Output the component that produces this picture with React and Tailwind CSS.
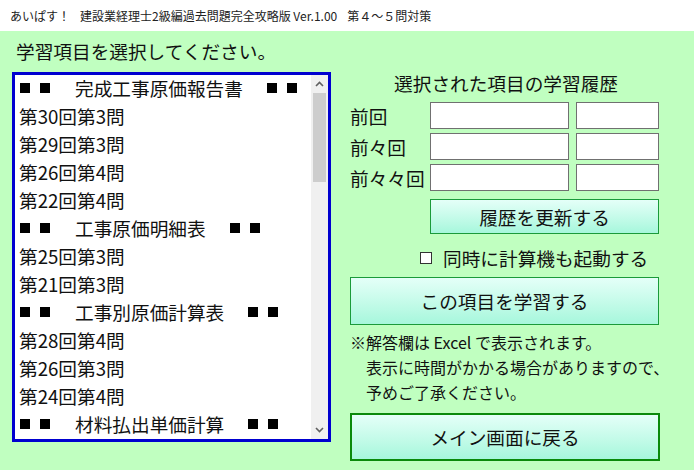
import React from "react";

const items = [
  { head: true, text: "完成工事原価報告書" },
  { text: "第30回第3問" },
  { text: "第29回第3問" },
  { text: "第26回第4問" },
  { text: "第22回第4問" },
  { head: true, text: "工事原価明細表" },
  { text: "第25回第3問" },
  { text: "第21回第3問" },
  { head: true, text: "工事別原価計算表" },
  { text: "第28回第4問" },
  { text: "第26回第3問" },
  { text: "第24回第4問" },
  { head: true, text: "材料払出単価計算" },
];

const Squares = () => (
  <span className="inline-flex gap-[10px]">
    <span className="inline-block w-[10px] h-[10px] bg-black" />
    <span className="inline-block w-[10px] h-[10px] bg-black" />
  </span>
);

const ListRow = ({ head, text }) => (
  <div className="h-[28px] pl-[5px] pb-[2px] flex items-center whitespace-nowrap">
    {head ? (
      <>
        <Squares />
        <span className="ml-[25px]">{text}</span>
        <span className="ml-[24px] flex">
          <Squares />
        </span>
      </>
    ) : (
      <span className="-ml-[1px]">{text}</span>
    )}
  </div>
);

const GreenButton = ({ children, className = "" }) => (
  <button
    className={`flex items-center justify-center bg-gradient-to-b from-[#e4fff8] to-[#a6f7dc] text-[18.67px] text-[#111] ${className}`}
  >
    {children}
  </button>
);

export default function App() {
  return (
    <div className="w-[694px] h-[470px] flex flex-col bg-[#c0ffc0] font-['Noto_Sans_CJK_JP','Noto_Sans',sans-serif] text-[#111] overflow-hidden">
      {/* title bar */}
      <div className="h-[31px] bg-white flex items-center pl-[10px] text-[12px] text-[#222] whitespace-nowrap">
        <span>あいぱす！</span>
        <span className="ml-[10px]">建設業経理士2級編過去問題完全攻略版 Ver.1.00</span>
        <span className="ml-[10px]">第４～５問対策</span>
      </div>

      <div className="flex flex-1">
        {/* left */}
        <div className="pl-[12px] flex flex-col">
          <div className="h-[41px] flex items-center pl-[4px] pb-[1px] text-[18.67px]">
            学習項目を選択してください。
          </div>
          <div className="w-[319px] h-[370px] border-[3px] border-[#0000d0] bg-white flex">
            <div className="flex-1 overflow-hidden text-[18.67px] leading-none">
              {items.map((it, i) => (
                <ListRow key={i} {...it} />
              ))}
            </div>
            <div className="w-[17px] bg-[#f0f0f0] flex flex-col items-center">
              <div className="h-[18px] flex items-center justify-center">
                <svg width="9" height="6" viewBox="0 0 9 6">
                  <path d="M1 5 L4.5 1.5 L8 5" fill="none" stroke="#606060" strokeWidth="1.6" />
                </svg>
              </div>
              <div className="w-[13px] h-[89px] bg-[#cdcdcd]" />
              <div className="flex-1" />
              <div className="h-[18px] flex items-center justify-center">
                <svg width="9" height="6" viewBox="0 0 9 6">
                  <path d="M1 1 L4.5 4.5 L8 1" fill="none" stroke="#606060" strokeWidth="1.6" />
                </svg>
              </div>
            </div>
          </div>
        </div>

        {/* right */}
        <div className="ml-[19px] w-[310px] flex flex-col pt-[41px]">
          <div className="h-[24px] flex items-center justify-center pl-[2px] pb-[2px] text-[18.67px] whitespace-nowrap">
            選択された項目の学習履歴
          </div>
          <div className="mt-[6px] flex flex-col gap-[4px]">
            {["前回", "前々回", "前々々回"].map((l) => (
              <div key={l} className="flex items-center h-[27px]">
                <span className="w-[80px] text-[18.67px] whitespace-nowrap">{l}</span>
                <div className="w-[139px] h-[27px] bg-white border border-[#707070]" />
                <div className="ml-[7px] w-[83px] h-[27px] bg-white border border-[#707070]" />
              </div>
            ))}
          </div>
          <GreenButton className="mt-[8px] ml-[80px] w-[229px] h-[35px] border border-[#1a9a3a]">
            履歴を更新する
          </GreenButton>
          <div className="mt-[12px] h-[24px] flex items-center pl-[70px] text-[18.67px] whitespace-nowrap">
            <span className="inline-block w-[12px] h-[12px] border-[1.5px] border-[#333] bg-white" />
            <span className="ml-[11px]">同時に計算機も起動する</span>
          </div>
          <GreenButton className="mt-[7px] w-[309px] h-[48px] border border-[#1a9a3a]">
            この項目を学習する
          </GreenButton>
          <div className="mt-[5px] text-[16px] leading-[25px] whitespace-nowrap">
            <div>※解答欄は Excel で表示されます。</div>
            <div className="pl-[16px]">表示に時間がかかる場合がありますので、</div>
            <div className="pl-[16px]">予めご了承ください。</div>
          </div>
          <GreenButton className="mt-[8px] w-[310px] h-[48px] border-2 border-[#0a8a0a]">
            メイン画面に戻る
          </GreenButton>
        </div>
      </div>
    </div>
  );
}
